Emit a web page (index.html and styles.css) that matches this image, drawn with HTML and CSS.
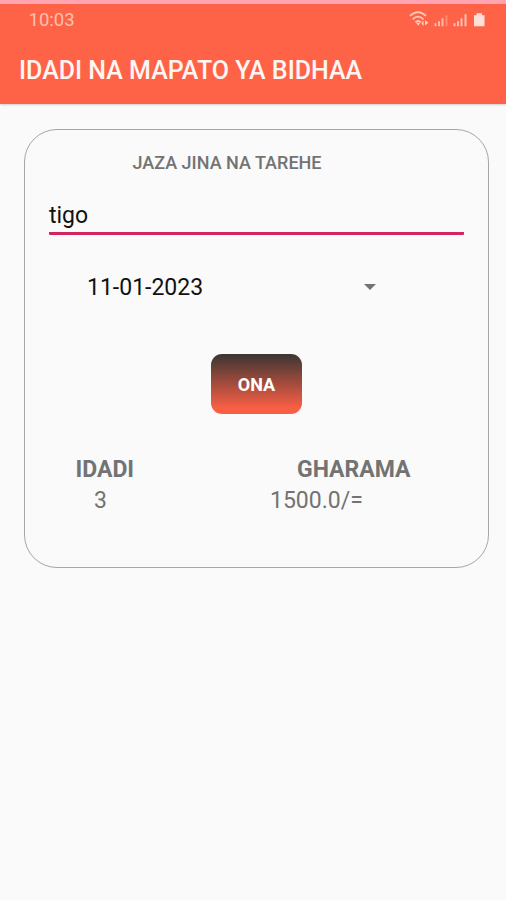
FILE: index.html
```html
<!DOCTYPE html>
<html lang="sw">
<head>
<meta charset="utf-8">
<title>Idadi na Mapato ya Bidhaa</title>
<link rel="stylesheet" href="styles.css">
</head>
<body>
<header class="app-bar">
  <div class="status">
    <span class="clock">10:03</span>
    <svg class="status-icons" width="80" height="20" viewBox="0 0.700 80 20" fill="none">
      <g stroke="#ffc8bb" stroke-width="1.8">
        <path d="M1 6.600Q9-1 17 6.600"/>
        <path d="M3.700 10Q9 4.500 14.500 10"/>
        <path d="M6.500 13Q9 10.500 12 13"/>
      </g>
      <g fill="#ffd0c5">
        <path d="M7.200 13.500h4L9.300 16.500zM12.500 14l2-3v6zM16 11l3.500 2.500L16 16z"/>
        <path d="M25.500 14h2v3h-2zM29 12h2v5h-2zM32.500 9h2v8h-2z" opacity=".8"/>
        <path d="M36.500 6h2v11h-2z" opacity=".35"/>
        <path d="M44.500 14h2v3h-2zM48 12h2v5h-2zM51.500 9h2v8h-2zM55.500 5h2v12h-2z" opacity=".85"/>
      </g>
      <path d="M65 6h2.500V4h5.500v2h2.500v11H65z" fill="#ffe0d9"/>
    </svg>
  </div>
  <h1 class="title">IDADI NA MAPATO YA BIDHAA</h1>
</header>
<main class="card">
  <h2 class="heading">JAZA JINA NA TAREHE</h2>
  <div class="field">tigo</div>
  <div class="spinner">
    <span>11-01-2023</span>
    <svg width="14" height="8" viewBox="0 0 14 8"><path d="M1 1h12L7 7z" fill="#737373"/></svg>
  </div>
  <button class="submit">ONA</button>
  <div class="results">
    <div class="count"><strong class="label">IDADI</strong><span class="value">3</span></div>
    <div class="cost"><strong class="label">GHARAMA</strong><span class="value">1500.0/=</span></div>
  </div>
</main>
</body>
</html>
```
FILE: styles.css
```css
* { box-sizing: border-box; }

body {
  margin: 0;
  height: 900px;
  background: #fafafa;
  color: #111;
  font-family: Roboto, sans-serif;
}

.app-bar {
  height: 104px;
  border-top: 4px solid #ffa4b0;
  background: #ff6347;
  box-shadow: 0 1px 2px rgba(0, 0, 0, .18);
}

.status {
  display: flex;
  justify-content: space-between;
  height: 32px;
  padding: 6px 17px 0 28.500px;
}

.clock {
  color: #ffc0b0;
  font-size: 18.500px;
  line-height: 20px;
}

.title {
  margin: 15px 0 0 19px;
  color: #fff5f2;
  font-size: 25px;
  font-weight: 500;
  line-height: 40px;
  white-space: nowrap;
}

.card {
  width: 465px;
  height: 439px;
  margin: 25px 0 0 24px;
  padding: 19px 24px 0;
  border: 1px solid #a6a6a6;
  border-radius: 33px;
}

.heading {
  margin: 0 0 0 83.500px;
  color: #737373;
  font-size: 18px;
  font-weight: 500;
  line-height: 28px;
}

.field {
  height: 58px;
  padding-top: 25px;
  border-bottom: 3px solid #d3265e;
  border-radius: 1px;
  font-size: 23px;
  line-height: 28px;
}

.spinner {
  display: flex;
  align-items: center;
  justify-content: space-between;
  width: 290px;
  height: 30px;
  margin: 37px 0 0 38px;
  font-size: 23px;
}

.submit {
  display: block;
  width: 91px;
  height: 60px;
  margin: 52px 0 0 162px;
  padding: 2px 0 0;
  border: 0;
  border-radius: 11px;
  background: linear-gradient(#3b3533, #f95f45 90%);
  color: #fff;
  font: 700 18px/20px Roboto, sans-serif;
}

.results {
  display: flex;
  margin-top: 40px;
  color: #737373;
  font-size: 23px;
  line-height: 31px;
}

.count,
.cost {
  display: flex;
  flex-direction: column;
}

.count {
  width: 221px;
  padding-left: 26.500px;
}

.count .value { padding-left: 18.500px; }

.label { font-weight: 700; }

.cost .label { padding-left: 27px; }
```
